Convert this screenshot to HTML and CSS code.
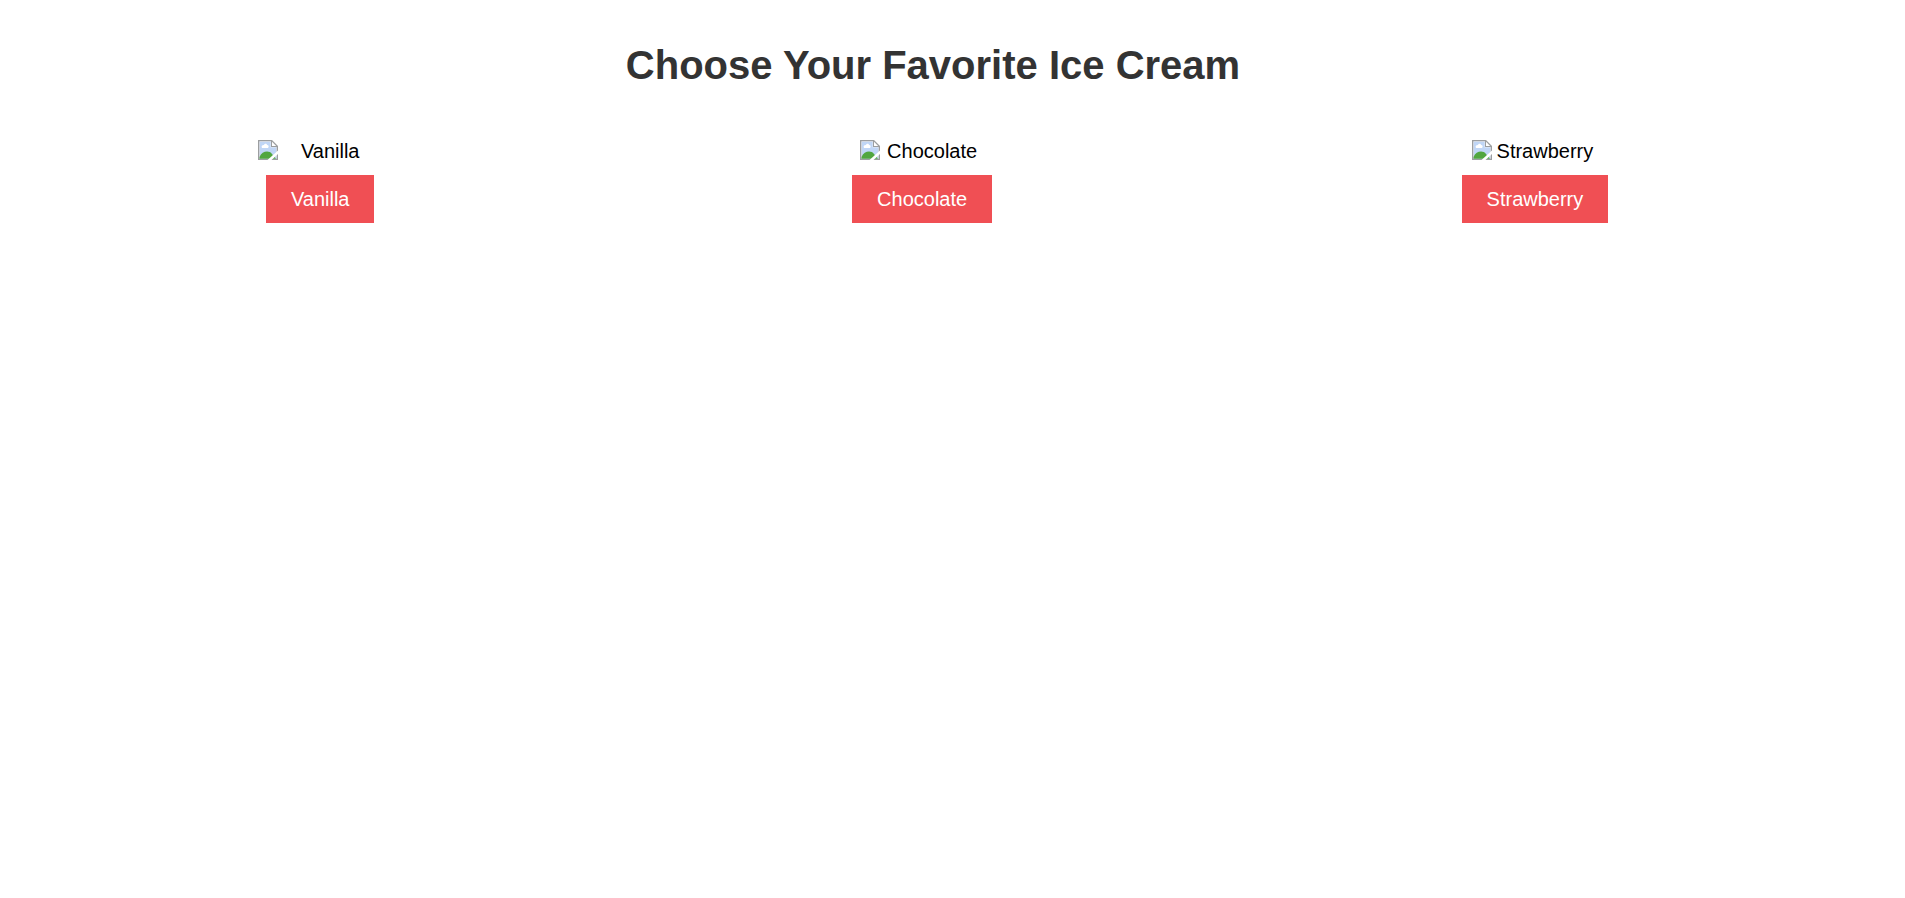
FILE: index.html
```html
<!DOCTYPE html>
<html lang="en">
<head>
<meta charset="utf-8">
<title>Choose Your Favorite Ice Cream</title>
<link rel="stylesheet" href="styles.css">
</head>
<body>
<svg class="defs" width="0" height="0" aria-hidden="true">
  <symbol id="picture" viewBox="0 0 20 20">
    <path d="M0 0H14L20 6V20H0Z" fill="#9c9ea0"/>
    <path d="M1.300 1.300H13V7H18.700V18.700H1.300Z" fill="#e4ecf8"/>
    <path d="M2 2H12.500V7.500H18V18.500H2Z" fill="#c0d6f6"/>
    <path d="M4 8C3 6 4 5 6 5C7 3 9 4 9 5C11 5 11 7 10 8Z" fill="#fff"/>
    <path d="M1.500 18.700V17C4 11 11 10 14 14L18 18.700Z" fill="#51a63f"/>
    <path d="M14 1.800V6H18.200Z" fill="#fff"/>
    <path d="M9.500 20L20 10.500V14L13.500 20Z" fill="#fff"/>
  </symbol>
</svg>
<h1 class="title">Choose Your Favorite Ice Cream</h1>
<main class="flavors">
  <section class="flavor">
    <div class="picture"><svg class="icon" aria-hidden="true"><use href="#picture"/></svg><span class="alt">Vanilla</span></div>
    <button class="choose" type="button">Vanilla</button>
  </section>
  <section class="flavor">
    <div class="picture"><svg class="icon" aria-hidden="true"><use href="#picture"/></svg><span class="alt">Chocolate</span></div>
    <button class="choose" type="button">Chocolate</button>
  </section>
  <section class="flavor">
    <div class="picture"><svg class="icon" aria-hidden="true"><use href="#picture"/></svg><span class="alt">Strawberry</span></div>
    <button class="choose" type="button">Strawberry</button>
  </section>
</main>
</body>
</html>
```
FILE: styles.css
```css
body {
  margin: 0;
  padding: 40px 62px 0 23px;
  background: #fff;
  color: #000;
  font-family: "Liberation Sans", Arial, sans-serif;
  font-size: 20px;
}

.defs {
  position: absolute;
}

.title {
  margin: 0 0 50px;
  color: #333;
  font-size: 40px;
  line-height: 50px;
  text-align: center;
}

.flavors {
  display: flex;
  justify-content: space-around;
}

.flavor {
  display: flex;
  flex-direction: column;
  align-items: center;
  gap: 12px;
}

.picture {
  display: flex;
  align-items: flex-start;
  width: 125px;
}

.icon {
  flex: none;
  width: 20px;
  height: 20px;
}

.alt {
  flex: 1;
  line-height: 23px;
  text-align: center;
}

.choose {
  padding: 12px 25px;
  border: 0;
  background: #f04f54;
  color: #fff;
  font: inherit;
  line-height: 24px;
  cursor: pointer;
}
```
